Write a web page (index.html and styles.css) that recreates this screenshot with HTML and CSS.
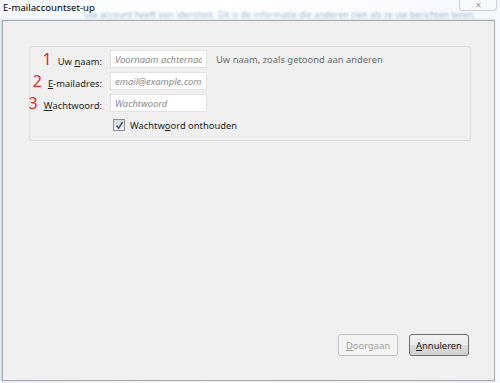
FILE: index.html
```html
<!DOCTYPE html>
<html lang="nl">
<head>
    <meta charset="UTF-8">
    <meta name="viewport" content="width=device-width, initial-scale=1.0">
    <title>E-mailaccountset-up</title>
    <link rel="stylesheet" href="styles.css">
</head>
<body>
    <div class="titlebar">
        <div class="title">E-mailaccountset-up</div>
        <div class="ghost-text">Uw account heeft een identiteit. Dit is de informatie die anderen zien als ze uw berichten lezen.</div>
        <div class="close-btn">&#x2715;</div>
    </div>

    <div class="dialog">
        <div class="groupbox">
            <div class="form-row">
                <label class="field-label"><span class="step">1</span>Uw&nbsp;<u>n</u>aam:</label>
                <input class="field-input" type="text" placeholder="Voornaam achternaam">
                <span class="hint">Uw naam, zoals getoond aan anderen</span>
            </div>
            <div class="form-row">
                <label class="field-label"><span class="step">2</span><u>E</u>-mailadres:</label>
                <input class="field-input" type="text" placeholder="email@example.com">
            </div>
            <div class="form-row">
                <label class="field-label"><span class="step">3</span><u>W</u>achtwoord:</label>
                <input class="field-input" type="password" placeholder="Wachtwoord">
            </div>
            <div class="check-row">
                <span class="checkbox">
                    <svg width="9" height="9" viewBox="0 0 9 9"><path d="M1.5 4.5 L3.6 7.2 L7.6 1" fill="none" stroke="#3a4f8a" stroke-width="1.4"/></svg>
                </span>
                <span class="check-label">Wachtw<u>o</u>ord onthouden</span>
            </div>
        </div>

        <div class="buttons">
            <button class="btn btn-disabled"><u>D</u>oorgaan</button>
            <button class="btn"><u>A</u>nnuleren</button>
        </div>
    </div>
</body>
</html>
```

FILE: styles.css
```css
* {
    margin: 0;
    padding: 0;
    box-sizing: border-box;
}

body {
    width: 500px;
    height: 383px;
    font-family: 'Noto Sans', 'Open Sans', sans-serif;
    font-size: 9.4px;
    color: #1e1e1e;
    background: linear-gradient(to right, #f4f8fc, #ffffff 40%, #f6f9fd);
    display: flex;
    flex-direction: column;
    overflow: hidden;
}

u {
    text-decoration: underline;
    text-underline-offset: 1px;
}

/* titelbalk */
.titlebar {
    height: 20px;
    position: relative;
    flex-shrink: 0;
}

.title {
    padding: 1px 0 0 3px;
    font-size: 9.6px;
    line-height: 13px;
    color: #000;
}

.ghost-text {
    position: absolute;
    left: 84px;
    top: 11px;
    white-space: nowrap;
    font-size: 8.8px;
    line-height: 9px;
    color: #7d9cc8;
    filter: blur(1.2px);
    opacity: 0.75;
}

.close-btn {
    position: absolute;
    right: 3px;
    top: 0;
    width: 38px;
    height: 11px;
    border: 1px solid #c9cfd6;
    border-top: none;
    border-radius: 0 0 4px 4px;
    background: #f7f9fb;
    color: #9aa0a8;
    font-size: 8px;
    line-height: 10px;
    text-align: center;
}

/* dialoog */
.dialog {
    flex: 1;
    margin: 0 5px 2px 2px;
    background: #f0f0f0;
    border: 1px solid #a9a9a9;
    box-shadow: -1px 0 2px rgba(120, 170, 230, 0.5);
    padding: 25px 22px 24px 26px;
    display: flex;
    flex-direction: column;
}

.groupbox {
    width: 442px;
    border: 1px solid #dcdcdc;
    border-radius: 3px;
    padding: 3px 0 8px 0;
    display: flex;
    flex-direction: column;
    gap: 4px;
}

.form-row {
    display: flex;
    align-items: center;
    height: 18px;
}

.field-label {
    width: 72px;
    flex-shrink: 0;
    display: flex;
    align-items: baseline;
    justify-content: flex-end;
    white-space: nowrap;
    margin-right: 8px;
    color: #1e1e1e;
}

.step {
    color: #e8262a;
    font-size: 16px;
    line-height: 16px;
    margin-right: 6px;
}

.field-input {
    width: 97px;
    height: 18px;
    flex-shrink: 0;
    border: 1px solid #e2e2e2;
    background: #fff;
    font-family: inherit;
    font-size: 9.4px;
    padding: 0 4px;
    outline: none;
}

.field-input::placeholder {
    color: #8a8a8a;
    font-style: italic;
}

.hint {
    margin-left: 9px;
    color: #6d6d6d;
    white-space: nowrap;
}

.check-row {
    display: flex;
    align-items: center;
    height: 14px;
    margin-top: 2px;
    padding-left: 83px;
}

.checkbox {
    width: 12px;
    height: 12px;
    border: 1px solid #8e8f8f;
    background: linear-gradient(to bottom, #dcdcdc, #f6f6f6);
    display: flex;
    align-items: center;
    justify-content: center;
    margin-right: 5px;
}

.check-label {
    color: #1e1e1e;
}

/* knoppen */
.buttons {
    margin-top: auto;
    display: flex;
    justify-content: flex-end;
    gap: 11px;
    padding-right: 3px;
}

.btn {
    width: 60px;
    height: 22px;
    border: 1px solid #707070;
    border-radius: 3px;
    background: linear-gradient(to bottom, #f2f2f2 0%, #ebebeb 50%, #dddddd 51%, #cfcfcf 100%);
    font-family: inherit;
    font-size: 9.4px;
    color: #1e1e1e;
}

.btn-disabled {
    border-color: #c2c2c2;
    background: #f4f4f4;
    color: #a0a0a0;
}
```
